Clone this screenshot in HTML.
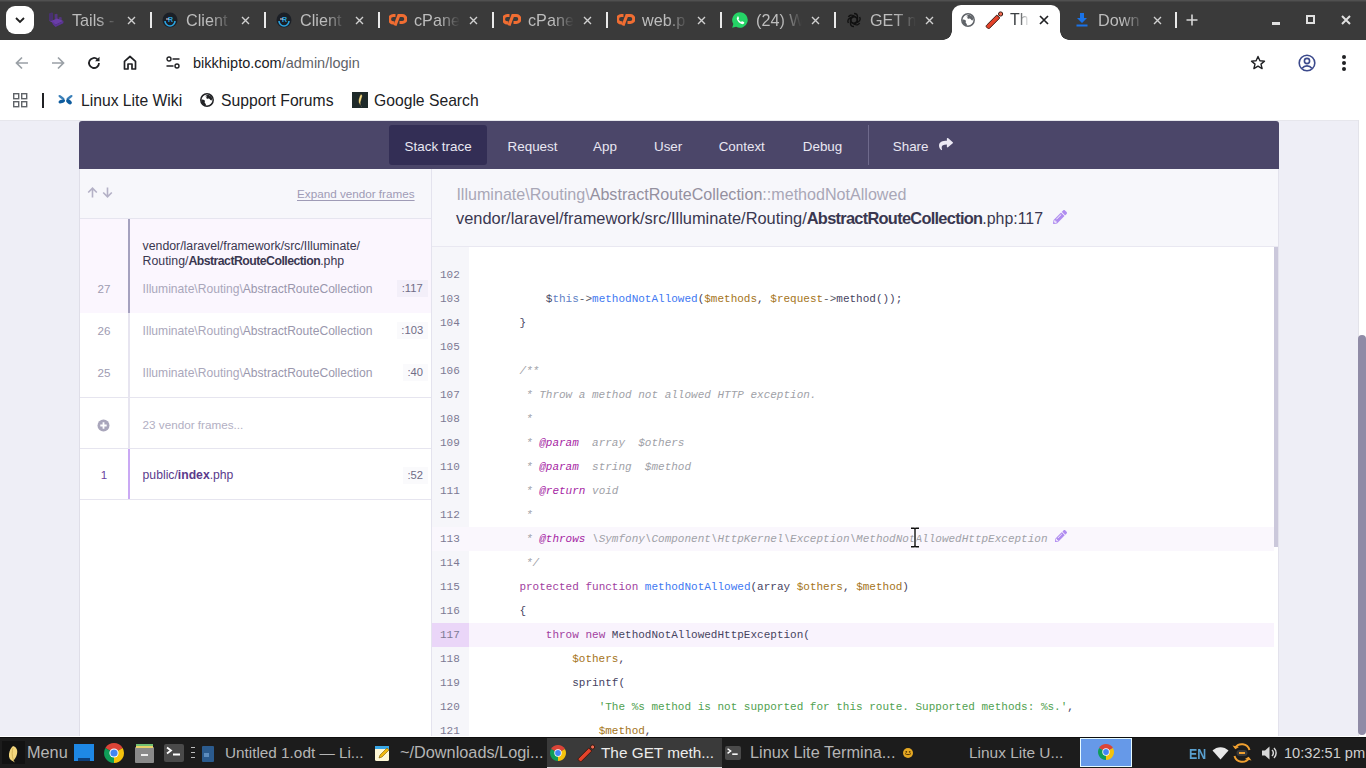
<!DOCTYPE html>
<html><head><meta charset="utf-8">
<style>
*{margin:0;padding:0;box-sizing:border-box}
html,body{width:1366px;height:768px;overflow:hidden;background:#fff;font-family:"Liberation Sans",sans-serif}
.a{position:absolute;white-space:pre}
#tabs{position:absolute;left:0;top:0;width:1366px;height:40px;background:#3a3a3a;overflow:hidden}
#toolbar{position:absolute;left:0;top:40px;width:1366px;height:44px;background:#fff}
#bm{position:absolute;left:0;top:84px;width:1366px;height:36px;background:#fff}
#page{position:absolute;left:0;top:120px;width:1366px;height:616px;background:#eeeef6;overflow:hidden}
#taskbar{position:absolute;left:0;top:737px;width:1366px;height:31px;background:#1c1c1c;overflow:hidden}
.tk{top:6px;font-size:16.3px;color:#b5b5b5}
.tabt{top:11px;font-size:16.2px;color:#bdbdbd;width:46px;overflow:hidden;-webkit-mask-image:linear-gradient(90deg,#000 55%,transparent 100%)}
.sep{position:absolute;top:12px;width:2px;height:16px;background:#eaeaea}
.bt{font-size:15.7px;color:#202124;top:7.5px}
.nav{position:absolute;left:79px;top:1px;width:1200px;height:48px;background:#4b4669;border-radius:3px 3px 0 0}
.ni{position:absolute;top:18px;font-size:13.4px;color:#e9e7f2}
.mono{font-family:"Liberation Mono",monospace}

.lt{font-size:12px}
.fn{left:91px;width:26px;text-align:center;font-size:11.6px;color:#9e9bb1}
.cn{left:142.6px;font-size:12.1px;color:#aaa7bb}
.cn .cc{color:#9a97ad}
.lb{font-size:11.2px;line-height:16.6px;text-align:center;color:#6f6c86}
.row{position:absolute;left:0;width:842px;height:24px}
.row.hov{background:#faf7fd}
.row.sel{background:#f9f3fd}
.lnum{position:absolute;left:0;top:0;width:37px;height:24px;padding-left:8px;font-family:"Liberation Mono",monospace;font-size:11px;line-height:24px;color:#7c7993}
.row.sel .lnum{background:#ead6f8}
.code{position:absolute;left:61px;top:0;font-family:"Liberation Mono",monospace;font-size:11px;line-height:24px;white-space:pre;color:#46435f}
.code .c{color:#a0a1a7;font-style:italic}
.code .dt{color:#a626a4;font-style:italic}
.code .k{color:#a13ea0}
.code .f{color:#4078f2}
.code .v{color:#a47420}
.code .s{color:#50a14f}
.code .t{color:#5f7fc5}
.code .g{color:#5a5c66}
.code .d{color:#46435f}
</style></head><body>
<div id="tabs">
<div class="a" style="left:0;top:0;width:1366px;height:1px;background:#505050"></div><div class="a" style="left:0;top:1px;width:1366px;height:1px;background:#444"></div>
<div class="a" style="left:6px;top:6px;width:28px;height:28px;background:#fff;border-radius:9px"></div>
<svg class="a" style="left:15px;top:17px" width="10" height="7" viewBox="0 0 10 7"><path d="M1 1l4 4 4-4" stroke="#202020" stroke-width="1.8" fill="none"/></svg>
<svg class="a" style="left:48px;top:11px" width="17" height="17" viewBox="0 0 17 17"><path d="M1 2.5L4 1.5 5 2v7.5L2 10.5 1 9.5z" fill="#4c2f7e" opacity=".8"/><path d="M6.5 3.5l2-.8 1 .6v6.5l-2.5 1z" fill="#5a3690" opacity=".85"/><path d="M10.5 6.5l2.2-.5 1 .6v3.5l-2.2.6z" fill="#5a3690" opacity=".8"/><path d="M1 9.5l6.5 4.3L15.5 10 9 7.5 3 10z" fill="#6a3da8"/><path d="M4.5 10.2l3 3.6 8-3.8-.2 2.2-7.8 3.8L4.5 13z" fill="#5b3496"/></svg>
<div class="a tabt" style="left:72px">Tails -</div>
<svg class="a" style="left:127px;top:16px" width="9" height="9" viewBox="0 0 9 9"><path d="M1 1l7 7M8 1L1 8" stroke="#d0d0d0" stroke-width="1.4"/></svg>
<div class="sep" style="left:150px"></div>
<svg class="a" style="left:162px;top:12px" width="16" height="16" viewBox="0 0 16 16"><circle cx="8" cy="8" r="7.5" fill="#1b1f26"/><path d="M3 9a5 5 0 0 0 10 0" stroke="#2aa3e0" stroke-width="1.6" fill="none"/><text x="8.5" y="10" font-size="7" font-family="Liberation Sans" font-weight="700" fill="#2aa3e0" text-anchor="middle">R</text><path d="M4 7h3" stroke="#ddd" stroke-width="1"/></svg>
<div class="a tabt" style="left:186px">Client</div>
<svg class="a" style="left:241px;top:16px" width="9" height="9" viewBox="0 0 9 9"><path d="M1 1l7 7M8 1L1 8" stroke="#d0d0d0" stroke-width="1.4"/></svg>
<div class="sep" style="left:264px"></div>
<svg class="a" style="left:276px;top:12px" width="16" height="16" viewBox="0 0 16 16"><circle cx="8" cy="8" r="7.5" fill="#1b1f26"/><path d="M3 9a5 5 0 0 0 10 0" stroke="#2aa3e0" stroke-width="1.6" fill="none"/><text x="8.5" y="10" font-size="7" font-family="Liberation Sans" font-weight="700" fill="#2aa3e0" text-anchor="middle">R</text><path d="M4 7h3" stroke="#ddd" stroke-width="1"/></svg>
<div class="a tabt" style="left:300px">Client</div>
<svg class="a" style="left:355px;top:16px" width="9" height="9" viewBox="0 0 9 9"><path d="M1 1l7 7M8 1L1 8" stroke="#d0d0d0" stroke-width="1.4"/></svg>
<div class="sep" style="left:378px"></div>
<svg class="a" style="left:389px;top:13px" width="18" height="13" viewBox="0 0 18 13"><path d="M6.5 2.5H4.2a3.7 3.7 0 0 0 0 7.4h1.2" stroke="#f06d32" stroke-width="3.1" fill="none"/><path d="M6 12.5L9.8 2.5h3.5a3.5 3.5 0 0 1 0 7H10.5" stroke="#f06d32" stroke-width="3.1" fill="none"/></svg>
<div class="a tabt" style="left:414px">cPane</div>
<svg class="a" style="left:469px;top:16px" width="9" height="9" viewBox="0 0 9 9"><path d="M1 1l7 7M8 1L1 8" stroke="#d0d0d0" stroke-width="1.4"/></svg>
<div class="sep" style="left:492px"></div>
<svg class="a" style="left:503px;top:13px" width="18" height="13" viewBox="0 0 18 13"><path d="M6.5 2.5H4.2a3.7 3.7 0 0 0 0 7.4h1.2" stroke="#f06d32" stroke-width="3.1" fill="none"/><path d="M6 12.5L9.8 2.5h3.5a3.5 3.5 0 0 1 0 7H10.5" stroke="#f06d32" stroke-width="3.1" fill="none"/></svg>
<div class="a tabt" style="left:528px">cPane</div>
<svg class="a" style="left:583px;top:16px" width="9" height="9" viewBox="0 0 9 9"><path d="M1 1l7 7M8 1L1 8" stroke="#d0d0d0" stroke-width="1.4"/></svg>
<div class="sep" style="left:606px"></div>
<svg class="a" style="left:617px;top:13px" width="18" height="13" viewBox="0 0 18 13"><path d="M6.5 2.5H4.2a3.7 3.7 0 0 0 0 7.4h1.2" stroke="#f06d32" stroke-width="3.1" fill="none"/><path d="M6 12.5L9.8 2.5h3.5a3.5 3.5 0 0 1 0 7H10.5" stroke="#f06d32" stroke-width="3.1" fill="none"/></svg>
<div class="a tabt" style="left:642px">web.p</div>
<svg class="a" style="left:697px;top:16px" width="9" height="9" viewBox="0 0 9 9"><path d="M1 1l7 7M8 1L1 8" stroke="#d0d0d0" stroke-width="1.4"/></svg>
<div class="sep" style="left:720px"></div>
<svg class="a" style="left:731px;top:11px" width="18" height="18" viewBox="0 0 18 18"><path d="M9 1.2a7.8 7.8 0 0 0-6.7 11.8L1.2 16.8l3.9-1A7.8 7.8 0 1 0 9 1.2z" fill="#25d366"/><path d="M6.2 5c.4-.2.8-.1 1 .3l.8 1.6c.1.3 0 .6-.2.8l-.5.5c.6 1.2 1.5 2.1 2.7 2.7l.5-.5c.2-.2.5-.3.8-.2l1.6.8c.4.2.5.6.3 1-.5 1-1.5 1.4-2.5 1.1-2.3-.8-4-2.5-4.8-4.8-.3-1 .1-2 1.1-2.5z" fill="#fff"/></svg>
<div class="a tabt" style="left:756px">(24) W</div>
<svg class="a" style="left:811px;top:16px" width="9" height="9" viewBox="0 0 9 9"><path d="M1 1l7 7M8 1L1 8" stroke="#d0d0d0" stroke-width="1.4"/></svg>
<div class="sep" style="left:834px"></div>
<svg class="a" style="left:846px;top:12px" width="16" height="16" viewBox="0 0 16 16"><g fill="none" stroke="#111" stroke-width="1.4"><path d="M8 1.5c2 0 3.5 1.5 3.5 3.3v4.5L7.5 11.6"/><path d="M13.6 5c1 1.7.5 3.8-1.1 4.7L8.6 12 4.6 9.7"/><path d="M13.6 11c-1 1.7-3.1 2.4-4.7 1.5L5 10.2V5.6"/><path d="M8 14.5c-2 0-3.5-1.5-3.5-3.3V6.7L8.5 4.4"/><path d="M2.4 11c-1-1.7-.5-3.8 1.1-4.7L7.4 4l4 2.3"/><path d="M2.4 5c1-1.7 3.1-2.4 4.7-1.5L11 5.8v4.6"/></g></svg>
<div class="a tabt" style="left:870px">GET n</div>
<svg class="a" style="left:925px;top:16px" width="9" height="9" viewBox="0 0 9 9"><path d="M1 1l7 7M8 1L1 8" stroke="#d0d0d0" stroke-width="1.4"/></svg>
<!-- active tab -->
<div class="a" style="left:952px;top:5px;width:108px;height:35px;background:#fff;border-radius:9px 9px 0 0"></div>
<div class="a" style="left:943px;top:31px;width:9px;height:9px;background:radial-gradient(circle at 0 0,#3a3a3a 8.5px,#fff 9px)"></div>
<div class="a" style="left:1060px;top:31px;width:9px;height:9px;background:radial-gradient(circle at 100% 0,#3a3a3a 8.5px,#fff 9px)"></div>
<svg class="a" style="left:961px;top:13px" width="14" height="14" viewBox="0 0 14 14"><circle cx="7" cy="7" r="6.2" fill="#fff" stroke="#5f6368" stroke-width="1.5"/><path d="M5 3.2c1-.9 2.3-1.4 3.6-1.3 1.4.4 2.7 1.4 3.3 2.6.3 1 .2 2-.2 2.8-.7.3-1.5-.3-1.8-1-.4-.7-1.2-.8-1.9-.6-.5.2-1.2 0-1.5-.5-.4-.6-.2-1.4.5-2z" fill="#5f6368"/><path d="M1.3 6.7c.9-.3 2.1-.2 2.9.4.8.5.9 1.3.5 2-.2.5.1 1 .6 1.3.6.4.8 1.2.5 2-.4.2-1 .1-1.5-.1C2.6 11.2 1.4 9.5 1.3 7.6z" fill="#5f6368"/></svg>
<svg class="a" style="left:985px;top:11px" width="19" height="18" viewBox="0 0 19 18"><path d="M1.6 14.2L11.8 4l3 3L4.6 17.2c-.6.6-1.4.6-2 0l-1-1c-.6-.6-.6-1.4 0-2z" fill="#e4432a" stroke="#3a1a12" stroke-width="1"/><circle cx="15.6" cy="3" r="2.1" fill="#f06a50" stroke="#3a1a12" stroke-width="1"/><path d="M13.3 5.4l1-1" stroke="#3a1a12" stroke-width="1"/></svg>
<div class="a" style="left:1010px;top:11px;font-size:16px;color:#3c4043;width:19px;overflow:hidden;-webkit-mask-image:linear-gradient(90deg,#000 45%,transparent 100%)">The GET</div>
<svg class="a" style="left:1039px;top:15px" width="10" height="10" viewBox="0 0 10 10"><path d="M1 1l8 8M9 1L1 9" stroke="#202124" stroke-width="1.7"/></svg>
<!-- download tab -->
<svg class="a" style="left:1076px;top:13px" width="12" height="14" viewBox="0 0 12 14"><path d="M4 0h4v5h3L6 10 1 5h3z" fill="#1a73e8"/><rect x="0.5" y="11.5" width="11" height="2" fill="#1a73e8"/></svg>
<div class="a tabt" style="left:1098px">Down</div>
<svg class="a" style="left:1153px;top:16px" width="9" height="9" viewBox="0 0 9 9"><path d="M1 1l7 7M8 1L1 8" stroke="#d0d0d0" stroke-width="1.4"/></svg>
<div class="sep" style="left:1175px"></div>
<svg class="a" style="left:1186px;top:14px" width="12" height="12" viewBox="0 0 12 12"><path d="M6 0.5v11M0.5 6h11" stroke="#d8d8d8" stroke-width="1.6"/></svg>
<div class="a" style="left:1272px;top:22px;width:8px;height:2.5px;background:#e0e0e0"></div>
<div class="a" style="left:1306px;top:15px;width:9px;height:9px;border:2.5px solid #e0e0e0"></div>
<svg class="a" style="left:1341px;top:15px" width="10" height="10" viewBox="0 0 10 10"><path d="M1 1l8 8M9 1L1 9" stroke="#e0e0e0" stroke-width="2"/></svg>
</div>

<div id="toolbar">
<svg class="a" style="left:15px;top:16px" width="14" height="14" viewBox="0 0 14 14"><path d="M13 7H2M7 1.5L1.5 7 7 12.5" stroke="#9aa0a6" stroke-width="1.7" fill="none"/></svg>
<svg class="a" style="left:51px;top:16px" width="14" height="14" viewBox="0 0 14 14"><path d="M1 7h11M7 1.5L12.5 7 7 12.5" stroke="#9aa0a6" stroke-width="1.7" fill="none"/></svg>
<svg class="a" style="left:87px;top:16px" width="14" height="14" viewBox="0 0 14 14"><path d="M12 7a5 5 0 1 1-1.5-3.6" stroke="#202124" stroke-width="1.8" fill="none"/><path d="M12.5 0.8v4.5H8z" fill="#202124"/></svg>
<svg class="a" style="left:123px;top:15px" width="14" height="15" viewBox="0 0 14 15"><path d="M1.5 14V6.3L7 1.5l5.5 4.8V14H9V9H5v5z" stroke="#202124" stroke-width="1.7" fill="none" stroke-linejoin="round"/></svg>
<svg class="a" style="left:166px;top:16px" width="14" height="14" viewBox="0 0 14 14"><circle cx="3" cy="3" r="2" fill="none" stroke="#202124" stroke-width="1.4"/><path d="M6.5 3h7M0.5 10h7" stroke="#202124" stroke-width="1.6"/><circle cx="11" cy="10" r="2" fill="none" stroke="#202124" stroke-width="1.4"/></svg>
<div class="a" style="left:193px;top:15px;font-size:14.5px;color:#202124">bikkhipto.com<span style="color:#5f6368">/admin/login</span></div>
<svg class="a" style="left:1250px;top:15px" width="16" height="16" viewBox="0 0 16 16"><path d="M8 1.5l1.9 4.2 4.6.4-3.5 3 1.1 4.5L8 11.2l-4.1 2.4L5 9.1l-3.5-3 4.6-.4z" fill="none" stroke="#202124" stroke-width="1.4" stroke-linejoin="round"/></svg>
<svg class="a" style="left:1298px;top:14px" width="18" height="18" viewBox="0 0 18 18"><circle cx="9" cy="9" r="7.8" fill="none" stroke="#3c4a8c" stroke-width="1.6"/><circle cx="9" cy="7" r="2.6" fill="none" stroke="#3c4a8c" stroke-width="1.6"/><path d="M4.2 14.2c1.2-1.6 2.8-2.3 4.8-2.3s3.6.7 4.8 2.3" fill="none" stroke="#3c4a8c" stroke-width="1.6"/></svg>
<div class="a" style="left:1342px;top:15px;width:4px;height:4px;border-radius:2px;background:#202124"></div>
<div class="a" style="left:1342px;top:21px;width:4px;height:4px;border-radius:2px;background:#202124"></div>
<div class="a" style="left:1342px;top:27px;width:4px;height:4px;border-radius:2px;background:#202124"></div>
</div>

<div id="bm">
<svg class="a" style="left:13px;top:9px" width="15" height="15" viewBox="0 0 15 15"><g fill="none" stroke="#5f6368" stroke-width="1.4"><rect x="0.7" y="0.7" width="5" height="5"/><rect x="8.7" y="0.7" width="5" height="5"/><rect x="0.7" y="8.7" width="5" height="5"/><rect x="8.7" y="8.7" width="5" height="5"/></g></svg>
<div class="a" style="left:42px;top:9px;width:2px;height:15px;background:#202124"></div>
<svg class="a" style="left:57px;top:9px" width="17" height="14" viewBox="0 0 17 14"><ellipse cx="4.5" cy="4.5" rx="3.6" ry="1.2" transform="rotate(35 4.5 4.5)" fill="#3a7fb8"/><ellipse cx="12.5" cy="4.5" rx="3.6" ry="1.2" transform="rotate(-35 12.5 4.5)" fill="#3a7fb8"/><ellipse cx="4.8" cy="8.3" rx="3.4" ry="1.7" transform="rotate(-20 4.8 8.3)" fill="#0e5c9e"/><ellipse cx="12" cy="8.8" rx="3.2" ry="2" transform="rotate(40 12 8.8)" fill="#0e5c9e"/></svg>
<div class="a bt" style="left:81px">Linux Lite Wiki</div>
<svg class="a" style="left:200px;top:8.8px" width="14" height="14" viewBox="0 0 14 14"><circle cx="7" cy="7" r="6.2" fill="#fff" stroke="#202124" stroke-width="1.5"/><path d="M5 3.2c1-.9 2.3-1.4 3.6-1.3 1.4.4 2.7 1.4 3.3 2.6.3 1 .2 2-.2 2.8-.7.3-1.5-.3-1.8-1-.4-.7-1.2-.8-1.9-.6-.5.2-1.2 0-1.5-.5-.4-.6-.2-1.4.5-2z" fill="#202124"/><path d="M1.3 6.7c.9-.3 2.1-.2 2.9.4.8.5.9 1.3.5 2-.2.5.1 1 .6 1.3.6.4.8 1.2.5 2-.4.2-1 .1-1.5-.1C2.6 11.2 1.4 9.5 1.3 7.6z" fill="#202124"/></svg>
<div class="a bt" style="left:221px">Support Forums</div>
<div class="a" style="left:352px;top:8px;width:16px;height:16px;background:#1f2a2a"></div>
<svg class="a" style="left:352px;top:8px" width="16" height="16" viewBox="0 0 16 16"><path d="M9.2 2.3c1 .3 1.3 1.3 1 2.5L8.8 9.5c-.3 1-.2 2.5.3 3.6-1.3-.4-2.4-1.6-2.5-3.2-.2-1.6.2-3.6.9-5.2.5-1.2 1.1-2.2 1.7-2.4z" fill="#f5dd85" stroke="#111" stroke-width=".5"/><path d="M8.5 13.3l1.3 1.2" stroke="#777" stroke-width=".6"/></svg>
<div class="a bt" style="left:374px">Google Search</div>
</div>

<div id="page">
  <div class="nav">
    <div class="a" style="left:310px;top:4px;width:98px;height:40px;background:#332e55;border-radius:3px"></div>
    <div class="ni" style="left:325.6px">Stack trace</div>
    <div class="ni" style="left:428.6px">Request</div>
    <div class="ni" style="left:514px">App</div>
    <div class="ni" style="left:575px">User</div>
    <div class="ni" style="left:639.7px">Context</div>
    <div class="ni" style="left:723.8px">Debug</div>
    <div class="a" style="left:789px;top:4px;width:1px;height:40px;background:#6f6a8c"></div>
    <div class="ni" style="left:813.8px">Share</div>
    <svg class="a" style="left:860px;top:16px" width="14" height="14" viewBox="0 0 512 512"><path d="M503.691 189.836L327.687 37.851C312.281 24.546 288 35.347 288 56.015v80.053C127.371 137.907 0 170.1 0 322.326c0 61.441 39.581 122.309 83.333 154.132 13.653 9.931 33.111-2.533 28.077-18.631C66.066 312.814 132.917 274.316 288 272.085V360c0 20.7 24.3 31.453 39.687 18.164l176.004-152c11.071-9.562 11.086-26.753 0-36.328z" fill="#ece9f5"/></svg>
  </div>
  <!-- left panel -->
  <div class="a" style="left:80px;top:49px;width:352px;height:570px;background:#fff;border-right:1px solid #e4e3ee"></div>
  <div class="a" style="left:80px;top:49px;width:351px;height:50px;background:#f7f7fb;border-bottom:1px solid #e6e5ef"></div>
  <svg class="a" style="left:87px;top:67px" width="11" height="11" viewBox="0 0 11 11"><path d="M5.5 10.5V1.5M1.2 5.5l4.3-4.3 4.3 4.3" stroke="#b4b1c6" stroke-width="1.6" fill="none"/></svg>
  <svg class="a" style="left:102px;top:67px" width="11" height="11" viewBox="0 0 11 11"><path d="M5.5 0.5v9M1.2 5.5l4.3 4.3 4.3-4.3" stroke="#b4b1c6" stroke-width="1.6" fill="none"/></svg>
  <div class="a lt" style="left:297px;top:67px;font-size:11.7px;color:#9f9bb6;text-decoration:underline;text-underline-offset:2px">Expand vendor frames</div>
  <!-- selected frame -->
  <div class="a" style="left:80px;top:99px;width:351px;height:94px;background:#fbf6fe"></div>
  <div class="a" style="left:128px;top:99px;width:2px;height:94px;background:#a5a1bf"></div>
  <div class="a lt" style="left:142.6px;top:119px;font-size:12.3px;line-height:15px;color:#3a3750">vendor/laravel/framework/src/Illuminate/
Routing/<b style="letter-spacing:-0.54px">AbstractRouteCollection</b>.php</div>
  <div class="a lt fn" style="top:162px">27</div>
  <div class="a lt cn" style="top:162px"><span>Illuminate\Routing\</span><span class="cc">AbstractRouteCollection</span></div>
  <div class="a lb" style="left:397px;top:160px;width:30.5px;background:#f3eff9">:117</div>
  <!-- 26 -->
  <div class="a" style="left:128px;top:193px;width:2px;height:135px;background:#e7e5f0"></div>
  <div class="a lt fn" style="top:204px">26</div>
  <div class="a lt cn" style="top:204px"><span>Illuminate\Routing\</span><span class="cc">AbstractRouteCollection</span></div>
  <div class="a lb" style="left:397px;top:202px;width:30.5px;background:#fafafc">:103</div>
  <div class="a lt fn" style="top:246px">25</div>
  <div class="a lt cn" style="top:246px"><span>Illuminate\Routing\</span><span class="cc">AbstractRouteCollection</span></div>
  <div class="a lb" style="left:403px;top:244px;width:24.5px;background:#fafafc">:40</div>
  <div class="a" style="left:80px;top:277px;width:351px;height:1px;background:#e6e5ef"></div>
  <svg class="a" style="left:97px;top:299px" width="13" height="13" viewBox="0 0 13 13"><circle cx="6.5" cy="6.5" r="6" fill="#a9a6bb"/><path d="M6.5 3.3v6.4M3.3 6.5h6.4" stroke="#fff" stroke-width="1.8"/></svg>
  <div class="a lt" style="left:142.6px;top:298px;font-size:11.7px;color:#b2afc3">23 vendor frames...</div>
  <div class="a" style="left:80px;top:328px;width:351px;height:1px;background:#e6e5ef"></div>
  <div class="a" style="left:128px;top:329px;width:2px;height:50px;background:#caa9f4"></div>
  <div class="a lt fn" style="top:348px;color:#6b3fa0">1</div>
  <div class="a lt" style="left:142.6px;top:348px;font-size:12.2px;color:#5b3a8c">public/<b>index</b>.php</div>
  <div class="a lb" style="left:403px;top:347px;width:24.5px;background:#fafafc">:52</div>
  <div class="a" style="left:80px;top:379px;width:351px;height:1px;background:#e6e5ef"></div>
  <div class="a" style="left:79px;top:49px;width:1px;height:567px;background:#dfdee8"></div>
  <!-- right header -->
  <div class="a" style="left:432px;top:49px;width:847px;height:78px;background:#f7f7fb;border-bottom:1px solid #e9e8f1"></div>
  <div class="a" style="left:456.4px;top:65px;font-size:16.1px;color:#a9a7b7"><span>Illuminate\Routing\</span><span style="color:#94909f">AbstractRouteCollection</span><span>::methodNotAllowed</span></div>
  <div class="a" style="left:456px;top:89px;font-size:16.4px;color:#3a3750">vendor/laravel/framework/src/Illuminate/Routing/<b style="letter-spacing:-0.72px">AbstractRouteCollection</b><span style="font-size:15.9px">.php:117</span></div>
  <svg class="a" style="left:1053px;top:90px" width="14" height="14" viewBox="0 0 512 512"><path d="M497.9 142.1l-46.1 46.1c-4.7 4.7-12.3 4.7-17 0l-111-111c-4.7-4.7-4.7-12.3 0-17l46.1-46.1c18.7-18.7 49.1-18.7 67.9 0l60.1 60.1c18.8 18.7 18.8 49.1 0 67.9zM284.2 99.8L21.6 362.4.4 483.9c-2.9 16.4 11.4 30.6 27.8 27.8l121.5-21.3 262.6-262.6c4.7-4.7 4.7-12.3 0-17l-111-111c-4.8-4.7-12.4-4.7-17.1 0zM124.1 339.9c-5.5-5.5-5.5-14.3 0-19.8l154-154c5.5-5.5 14.3-5.5 19.8 0s5.5 14.3 0 19.8l-154 154c-5.5 5.5-14.3 5.5-19.8 0zM88 424h48v36.3l-64.5 11.3-31.1-31.1L51.7 376H88v48z" fill="#b08cf0"/></svg>
  <!-- code -->
  <div class="a" style="left:432px;top:127px;width:847px;height:489px;background:#fff;overflow:hidden">
    <div class="a" style="left:0;top:0;width:37px;height:489px;background:#f6f6fa"></div>
<div class="row" style="top:16px"><div class="lnum">102</div><div class="code"></div></div>
<div class="row" style="top:40px"><div class="lnum">103</div><div class="code"><span class="d">        $</span><span class="t">this</span><span class="g">-&gt;</span><span class="f">methodNotAllowed</span><span class="d">(</span><span class="v">$methods</span><span class="d">, </span><span class="v">$request</span><span class="g">-&gt;</span><span class="d">method());</span></div></div>
<div class="row" style="top:64px"><div class="lnum">104</div><div class="code"><span class="d">    }</span></div></div>
<div class="row" style="top:88px"><div class="lnum">105</div><div class="code"></div></div>
<div class="row" style="top:112px"><div class="lnum">106</div><div class="code"><span class="c">    /**</span></div></div>
<div class="row" style="top:136px"><div class="lnum">107</div><div class="code"><span class="c">     * Throw a method not allowed HTTP exception.</span></div></div>
<div class="row" style="top:160px"><div class="lnum">108</div><div class="code"><span class="c">     *</span></div></div>
<div class="row" style="top:184px"><div class="lnum">109</div><div class="code"><span class="c">     * </span><span class="dt">@param</span><span class="c">  array  $others</span></div></div>
<div class="row" style="top:208px"><div class="lnum">110</div><div class="code"><span class="c">     * </span><span class="dt">@param</span><span class="c">  string  $method</span></div></div>
<div class="row" style="top:232px"><div class="lnum">111</div><div class="code"><span class="c">     * </span><span class="dt">@return</span><span class="c"> void</span></div></div>
<div class="row" style="top:256px"><div class="lnum">112</div><div class="code"><span class="c">     *</span></div></div>
<div class="row hov" style="top:280px"><div class="lnum">113</div><div class="code"><span class="c">     * </span><span class="dt">@throws</span><span class="c"> \Symfony\Component\HttpKernel\Exception\MethodNotAllowedHttpException</span></div></div>
<div class="row" style="top:304px"><div class="lnum">114</div><div class="code"><span class="c">     */</span></div></div>
<div class="row" style="top:328px"><div class="lnum">115</div><div class="code"><span class="d">    </span><span class="k">protected</span><span class="d"> </span><span class="k">function</span><span class="d"> </span><span class="f">methodNotAllowed</span><span class="d">(array </span><span class="v">$others</span><span class="d">, </span><span class="v">$method</span><span class="d">)</span></div></div>
<div class="row" style="top:352px"><div class="lnum">116</div><div class="code"><span class="d">    {</span></div></div>
<div class="row sel" style="top:376px"><div class="lnum">117</div><div class="code"><span class="d">        </span><span class="k">throw</span><span class="d"> </span><span class="k">new</span><span class="d"> MethodNotAllowedHttpException(</span></div></div>
<div class="row" style="top:400px"><div class="lnum">118</div><div class="code"><span class="d">            </span><span class="v">$others</span><span class="d">,</span></div></div>
<div class="row" style="top:424px"><div class="lnum">119</div><div class="code"><span class="d">            sprintf(</span></div></div>
<div class="row" style="top:448px"><div class="lnum">120</div><div class="code"><span class="d">                </span><span class="s">&#x27;The %s method is not supported for this route. Supported methods: %s.&#x27;</span><span class="d">,</span></div></div>
<div class="row" style="top:472px"><div class="lnum">121</div><div class="code"><span class="d">                </span><span class="v">$method</span><span class="d">,</span></div></div>
  </div>
  <svg class="a" style="left:1055px;top:410px" width="12" height="12" viewBox="0 0 512 512"><path d="M497.9 142.1l-46.1 46.1c-4.7 4.7-12.3 4.7-17 0l-111-111c-4.7-4.7-4.7-12.3 0-17l46.1-46.1c18.7-18.7 49.1-18.7 67.9 0l60.1 60.1c18.8 18.7 18.8 49.1 0 67.9zM284.2 99.8L21.6 362.4.4 483.9c-2.9 16.4 11.4 30.6 27.8 27.8l121.5-21.3 262.6-262.6c4.7-4.7 4.7-12.3 0-17l-111-111c-4.8-4.7-12.4-4.7-17.1 0zM124.1 339.9c-5.5-5.5-5.5-14.3 0-19.8l154-154c5.5-5.5 14.3-5.5 19.8 0s5.5 14.3 0 19.8l-154 154c-5.5 5.5-14.3 5.5-19.8 0zM88 424h48v36.3l-64.5 11.3-31.1-31.1L51.7 376H88v48z" fill="#b08cf0"/></svg>
  <svg class="a" style="left:910px;top:407px" width="10" height="21" viewBox="0 0 10 21"><path d="M1 1.2h3.2L5 2l.8-.8H9M5 2v17M1 19.8h3.2L5 19l.8.8H9" stroke="#fff" stroke-width="3" fill="none"/><path d="M1 1.2h3.2L5 2l.8-.8H9M5 2v17M1 19.8h3.2L5 19l.8.8H9" stroke="#111" stroke-width="1.4" fill="none"/></svg>
  <div class="a" style="left:1274px;top:127px;width:5px;height:489px;background:#fff;border-left:3px solid #fff;border-right:1px solid #e6e5ee"></div><div class="a" style="left:1274px;top:127px;width:4px;height:300px;background:#cbc8db"></div>
  <div class="a" style="left:1278px;top:49px;width:1px;height:567px;background:#e3e2ec"></div>
  <!-- page scrollbar -->
  <div class="a" style="left:1358px;top:0;width:8px;height:617px;background:#fff;border-left:1px solid #e3e3ea"></div>
  <div class="a" style="left:1358px;top:215px;width:8px;height:400px;background:#8f8ba6;border-radius:4px"></div>
  <div class="a" style="left:0;top:0;width:1358px;height:1px;background:#e6e6ec"></div>
</div>

<div id="taskbar">
<div class="a" style="left:0;top:0;width:1366px;height:1px;background:#0e0e0e"></div>
<div class="a" style="left:2px;top:4px;width:23px;height:23px;background:#121212"></div>
<svg class="a" style="left:7px;top:8px" width="12" height="18" viewBox="0 0 12 18"><path d="M6 1C9.5 2 11 5 10 9c-.6 3-2.5 5.5-3.5 6.5L8 17.5 5.5 16C3 15 1.5 12.5 2 9 2.5 5.5 4 2.5 6 1z" fill="#f3d77d"/><path d="M6 3c-1 3-1.5 7 .5 12.5" stroke="#c9a84a" stroke-width="0.8" fill="none"/></svg>
<div class="a tk" style="left:27px">Menu</div>
<div class="a" style="left:74px;top:7px;width:20px;height:17px;background:#1e88e5"></div>
<div class="a" style="left:78px;top:21px;width:12px;height:3px;background:#0d3f7a"></div>
<svg class="a" style="left:104px;top:6px" width="20" height="20" viewBox="0 0 20 20"><path d="M10 10L1.34 5A10 10 0 0 1 18.66 5z" fill="#db4437"/><path d="M10 10l8.66-5A10 10 0 0 1 10 20z" fill="#f4c20d"/><path d="M10 10v10A10 10 0 0 1 1.34 5z" fill="#0f9d58"/><circle cx="10" cy="10" r="4.6" fill="#fff"/><circle cx="10" cy="10" r="3.6" fill="#4285f4"/></svg>
<div class="a" style="left:135px;top:10px;width:19px;height:16px;background:#8a8a8a;border-radius:1px"></div>
<div class="a" style="left:136px;top:7px;width:17px;height:2px;background:#6fbf73"></div>
<div class="a" style="left:136px;top:9px;width:17px;height:2px;background:#e8d36a"></div>
<div class="a" style="left:141px;top:17px;width:7px;height:2px;background:#eee"></div>
<div class="a" style="left:164px;top:7px;width:20px;height:18px;background:#4a4a4a;border-radius:2px"></div><svg class="a" style="left:164px;top:7px" width="20" height="18" viewBox="0 0 20 18"><path d="M3 3.5l4 3-4 3" stroke="#fff" stroke-width="1.8" fill="none"/><path d="M9 10.5h7" stroke="#fff" stroke-width="2"/></svg>
<div class="a" style="left:191px;top:10px;width:4px;height:1px;background:#bbb"></div>
<div class="a" style="left:191px;top:15px;width:4px;height:1px;background:#bbb"></div>
<div class="a" style="left:191px;top:20px;width:4px;height:1px;background:#bbb"></div>
<div class="a" style="left:202px;top:9px;width:12px;height:16px;background:#2b5b8e;border-radius:1px"></div>
<div class="a" style="left:204px;top:16px;width:5px;height:4px;background:#5d8dbf"></div>
<div class="a tk" style="left:225px;font-size:15.3px;top:7px">Untitled 1.odt — Li...</div>
<svg class="a" style="left:374px;top:8px" width="17" height="17" viewBox="0 0 17 17"><rect x="1" y="2" width="14" height="14" rx="1.5" fill="#fff8d6"/><rect x="1" y="1" width="14" height="3" fill="#39a7e6"/><path d="M5 13l1-3 7-7 2 2-7 7z" fill="#f2b90f" stroke="#7a5a00" stroke-width="0.6"/></svg>
<div class="a tk" style="left:400px">~/Downloads/Logi...</div>
<div class="a" style="left:547px;top:1px;width:175px;height:30px;background:#3a3a3a"></div>
<div class="a" style="left:547px;top:30px;width:175px;height:2px;background:#d8d8d8"></div>
<svg class="a" style="left:550px;top:8px" width="16" height="16" viewBox="0 0 20 20"><path d="M10 10L1.34 5A10 10 0 0 1 18.66 5z" fill="#db4437"/><path d="M10 10l8.66-5A10 10 0 0 1 10 20z" fill="#f4c20d"/><path d="M10 10v10A10 10 0 0 1 1.34 5z" fill="#0f9d58"/><circle cx="10" cy="10" r="4.6" fill="#fff"/><circle cx="10" cy="10" r="3.6" fill="#4285f4"/></svg>
<svg class="a" style="left:577px;top:7px" width="19" height="18" viewBox="0 0 19 18"><path d="M1.6 14.2L11.8 4l3 3L4.6 17.2c-.6.6-1.4.6-2 0l-1-1c-.6-.6-.6-1.4 0-2z" fill="#e4432a" stroke="#3a1a12" stroke-width="1"/><circle cx="15.6" cy="3" r="2.1" fill="#f06a50" stroke="#3a1a12" stroke-width="1"/></svg>
<div class="a tk" style="left:601px;color:#ececec;font-size:15.35px;top:7px">The GET meth...</div>
<div class="a" style="left:725px;top:9px;width:16px;height:14px;background:#4a4a4a;border-radius:2px"></div><svg class="a" style="left:725px;top:9px" width="16" height="14" viewBox="0 0 20 18"><path d="M3 3.5l4 3-4 3" stroke="#fff" stroke-width="1.8" fill="none"/><path d="M9 10.5h7" stroke="#fff" stroke-width="2"/></svg>
<div class="a tk" style="left:750px">Linux Lite Termina...</div>
<svg class="a" style="left:902px;top:10px" width="12" height="12" viewBox="0 0 12 12"><circle cx="6" cy="6" r="5" fill="#e5a823"/><path d="M3 6.5c1 1.5 5 1.5 6 0" stroke="#5a3a00" stroke-width="1" fill="none"/><circle cx="4.3" cy="4.8" r=".9" fill="#5a3a00"/><circle cx="7.7" cy="4.8" r=".9" fill="#5a3a00"/></svg>
<div class="a tk" style="left:969px;font-size:15.45px;top:7px">Linux Lite U...</div>
<div class="a" style="left:1080px;top:1px;width:52px;height:29px;background:#6699e8;border:1px solid #e6faff"></div>
<svg class="a" style="left:1098px;top:7px" width="16" height="16" viewBox="0 0 20 20"><path d="M10 10L1.34 5A10 10 0 0 1 18.66 5z" fill="#db4437"/><path d="M10 10l8.66-5A10 10 0 0 1 10 20z" fill="#f4c20d"/><path d="M10 10v10A10 10 0 0 1 1.34 5z" fill="#0f9d58"/><circle cx="10" cy="10" r="4.6" fill="#fff"/><circle cx="10" cy="10" r="3.6" fill="#4285f4"/></svg>
<div class="a" style="left:1189px;top:9px;font-size:14px;font-weight:700;color:#5aa0cf;transform:scaleX(0.88);transform-origin:0 0">EN</div>
<svg class="a" style="left:1212px;top:9px" width="17" height="14" viewBox="0 0 17 14"><path d="M8.5 13.5L0.5 4.5C5 0 12 0 16.5 4.5z" fill="#e8e8e8"/></svg>
<svg class="a" style="left:1231px;top:5px" width="22" height="22" viewBox="0 0 22 22"><path d="M18.5 8A8 8 0 0 0 4 6" stroke="#f0a030" stroke-width="2" fill="none"/><path d="M3.5 14A8 8 0 0 0 18 16" stroke="#f0a030" stroke-width="2" fill="none"/><path d="M1.5 3.5l2.8 3.8 3.8-2.3z" fill="#f0a030"/><path d="M20.5 18.5l-2.8-3.8-3.8 2.3z" fill="#f0a030"/><rect x="5.5" y="8" width="11" height="6" rx="3" fill="#3a3a3a"/><rect x="8" y="10" width="6" height="2" fill="#f0a030"/></svg>
<svg class="a" style="left:1261px;top:8px" width="16" height="16" viewBox="0 0 16 16"><path d="M1 5.5h3L8.5 1.5v13L4 10.5H1z" fill="#d8d8d8"/><path d="M11 5a4 4 0 0 1 0 6M13 3a7 7 0 0 1 0 10" stroke="#d8d8d8" stroke-width="1.5" fill="none"/></svg>
<div class="a tk" style="left:1284px;color:#d0d0d0;font-size:14.6px;top:8px">10:32:51 pm</div>
<div class="a" style="left:0;top:31px;width:1366px;height:1px;background:#0e0e0e"></div>
</div>
</body></html>
